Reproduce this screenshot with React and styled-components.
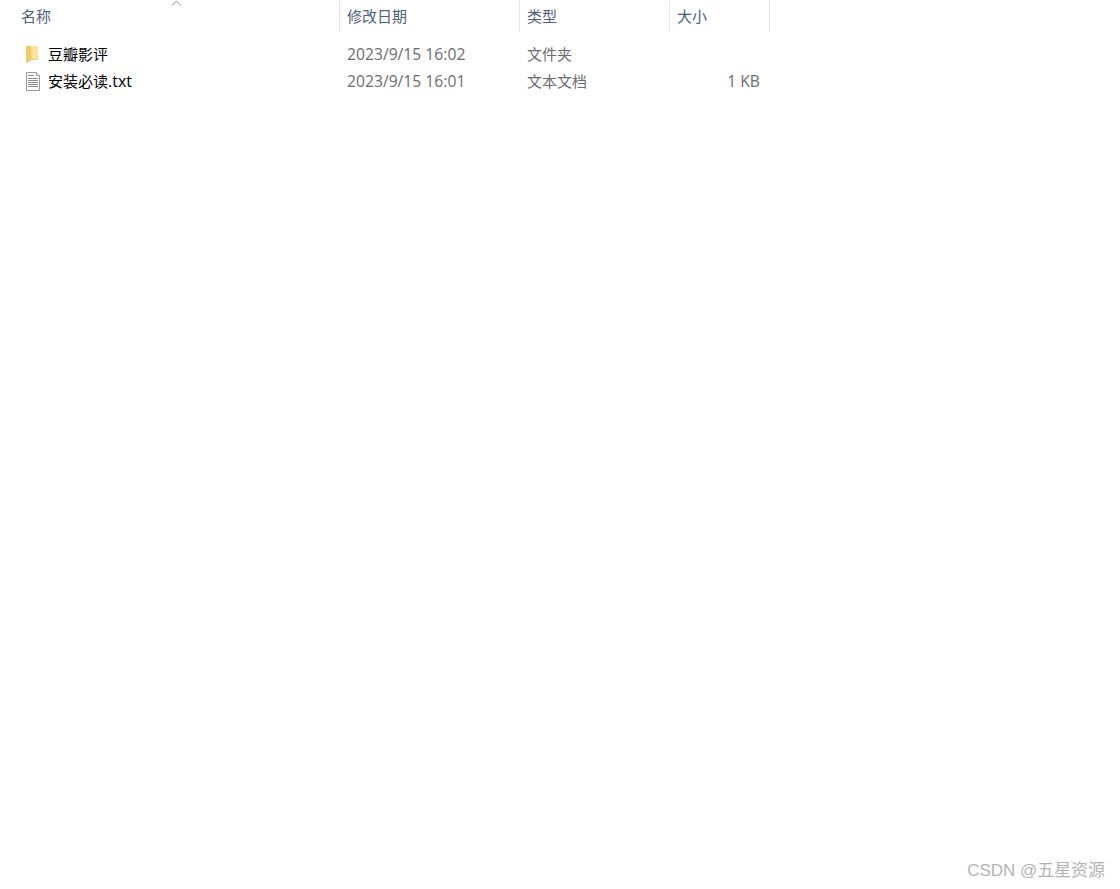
import React from "react";
import styled, { createGlobalStyle } from "styled-components";

const Global = createGlobalStyle`
  html, body { margin: 0; padding: 0; background: #fff; }
  body { font-family: "Open Sans", "Noto Sans CJK SC", sans-serif; }
  #root { min-height: 889px; }
`;

const Page = styled.div`
  position: relative;
  width: 1120px;
  height: 889px;
  background: #fff;
  overflow: hidden;
`;

const COLS = "340px 180px 150px 100px";

const Header = styled.div`
  display: grid;
  grid-template-columns: ${COLS};
  width: 770px;
  height: 32px;
`;

const HeaderCell = styled.div`
  position: relative;
  box-sizing: border-box;
  height: 32px;
  padding: 6px 0 0 ${(p) => p.$pad}px;
  font-size: 15px;
  line-height: 20px;
  color: #4c607a;
  border-right: 1px solid #e5e5e5;
`;

const SortCaret = styled.svg`
  position: absolute;
  left: 171px;
  top: 0;
  width: 11px;
  height: 6px;
`;

const List = styled.div`
  padding-top: 9px;
  width: 770px;
`;

const Row = styled.div`
  display: grid;
  grid-template-columns: ${COLS};
  height: 27px;
  align-items: center;
  font-size: 15px;
  line-height: 27px;
`;

const NameCell = styled.div`
  display: flex;
  align-items: center;
  padding-left: 26px;
  gap: 8px;
  color: #000;
`;

const NameText = styled.span`
  white-space: nowrap;
`;

const Extension = styled.span`
  font-size: 16px;
`;

const IconSlot = styled.svg`
  width: 14px;
  height: 19px;
  flex: none;
`;

const InfoCell = styled.div`
  box-sizing: border-box;
  padding-left: 7px;
  color: #6d6d6d;
  white-space: nowrap;
`;

const DateCell = styled(InfoCell)`
  font-size: 15.7px;
`;

const SizeCell = styled(InfoCell)`
  padding: 0 10px 0 0;
  font-size: 15.7px;
  text-align: right;
`;

const Watermark = styled.div`
  position: absolute;
  right: 15px;
  top: 860px;
  font-family: "Liberation Sans", "Noto Sans CJK SC", sans-serif;
  font-size: 17px;
  line-height: 22px;
  letter-spacing: -0.05px;
  color: #b4b4b4;
  white-space: nowrap;
`;

const FolderIcon = () => (
  <IconSlot viewBox="0 0 14 19">
    <path d="M5 1h7v13.5H5z" fill="#fde39a" />
    <path d="M0 1h5.5v14L2 17.5H0z" fill="#efcb6e" />
    <path d="M5.5 14.5H12" stroke="#f0cf7c" strokeWidth="1" fill="none" />
  </IconSlot>
);

const FileIcon = () => (
  <IconSlot viewBox="0 0 14 19">
    <path d="M.5.5h10l3 3v15H.5z" fill="#fdfdfd" stroke="#9a9a9a" />
    <path d="M10.5.5v3h3" fill="#eeeeee" stroke="#9a9a9a" />
    <path d="M2 3.5h6M2 6.5h10M2 8.5h10M2 10.5h10M2 12.5h10M2 14.5h10" stroke="#8c8c8c" strokeWidth="1" />
  </IconSlot>
);

const rows = [
  { name: "豆瓣影评", date: "2023/9/15 16:02", type: "文件夹", size: "", Icon: FolderIcon },
  { name: "安装必读", ext: ".txt", date: "2023/9/15 16:01", type: "文本文档", size: "1 KB", Icon: FileIcon },
];

export default function App() {
  return (
    <Page>
      <Global />
      <Header>
        <HeaderCell $pad={21}>
          名称
          <SortCaret viewBox="0 0 11 6">
            <path d="M1 5.5 5.5 1 10 5.5" fill="none" stroke="#8a8a8a" strokeWidth="1" />
          </SortCaret>
        </HeaderCell>
        <HeaderCell $pad={7}>修改日期</HeaderCell>
        <HeaderCell $pad={7}>类型</HeaderCell>
        <HeaderCell $pad={7}>大小</HeaderCell>
      </Header>
      <List>
        {rows.map(({ name, ext, date, type, size, Icon }) => (
          <Row key={name}>
            <NameCell>
              <Icon />
              <NameText>
                {name}
                {ext && <Extension>{ext}</Extension>}
              </NameText>
            </NameCell>
            <DateCell>{date}</DateCell>
            <InfoCell>{type}</InfoCell>
            <SizeCell>{size}</SizeCell>
          </Row>
        ))}
      </List>
      <Watermark>CSDN @五星资源</Watermark>
    </Page>
  );
}
